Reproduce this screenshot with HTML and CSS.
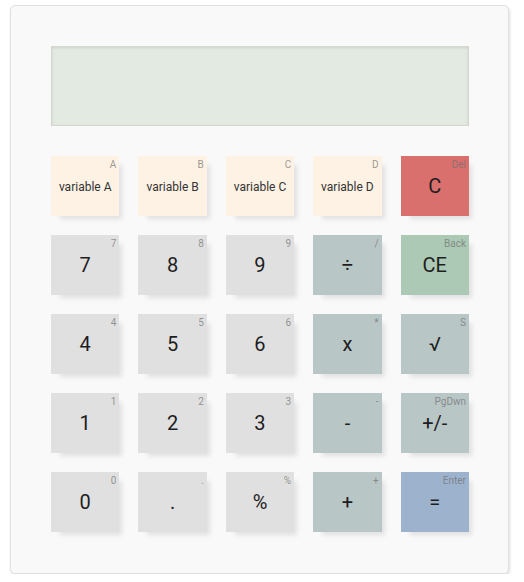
FILE: index.html
```html
<!DOCTYPE html>
<html>
<head>
<meta charset="utf-8">
<link rel="stylesheet" href="styles.css">
</head>
<body>
<div class="calc">
  <div class="display"></div>
  <div class="keys">
    <div class="key var"><span class="hint">A</span><span class="lbl small">variable A</span></div>
    <div class="key var"><span class="hint">B</span><span class="lbl small">variable B</span></div>
    <div class="key var"><span class="hint">C</span><span class="lbl small">variable C</span></div>
    <div class="key var"><span class="hint">D</span><span class="lbl small">variable D</span></div>
    <div class="key clear"><span class="hint">Del</span><span class="lbl">C</span></div>

    <div class="key num"><span class="hint">7</span><span class="lbl">7</span></div>
    <div class="key num"><span class="hint">8</span><span class="lbl">8</span></div>
    <div class="key num"><span class="hint">9</span><span class="lbl">9</span></div>
    <div class="key op"><span class="hint">/</span><span class="lbl">÷</span></div>
    <div class="key ce"><span class="hint">Back</span><span class="lbl">CE</span></div>

    <div class="key num"><span class="hint">4</span><span class="lbl">4</span></div>
    <div class="key num"><span class="hint">5</span><span class="lbl">5</span></div>
    <div class="key num"><span class="hint">6</span><span class="lbl">6</span></div>
    <div class="key op"><span class="hint">*</span><span class="lbl">x</span></div>
    <div class="key op"><span class="hint">S</span><span class="lbl">√</span></div>

    <div class="key num"><span class="hint">1</span><span class="lbl">1</span></div>
    <div class="key num"><span class="hint">2</span><span class="lbl">2</span></div>
    <div class="key num"><span class="hint">3</span><span class="lbl">3</span></div>
    <div class="key op"><span class="hint">-</span><span class="lbl">-</span></div>
    <div class="key op"><span class="hint">PgDwn</span><span class="lbl">+/-</span></div>

    <div class="key num"><span class="hint">0</span><span class="lbl">0</span></div>
    <div class="key num"><span class="hint">.</span><span class="lbl">.</span></div>
    <div class="key num"><span class="hint">%</span><span class="lbl">%</span></div>
    <div class="key op"><span class="hint">+</span><span class="lbl">+</span></div>
    <div class="key eq"><span class="hint">Enter</span><span class="lbl">=</span></div>
  </div>
</div>
</body>
</html>
```
FILE: styles.css
```css
html, body {
  margin: 0;
  padding: 0;
  background: #ffffff;
}
body {
  font-family: Roboto, "Liberation Sans", sans-serif;
  color: #222;
}
.calc {
  box-sizing: border-box;
  margin: 5px 0 0 10px;
  width: 499px;
  height: 569px;
  background: #f9f9f9;
  border: 1px solid #e0e0e0;
  border-radius: 5px;
  box-shadow: 1px 2px 3px rgba(0, 0, 0, 0.12);
  padding: 40px 39px 40px 40px;
}
.display {
  box-sizing: border-box;
  width: 418px;
  height: 80px;
  background: #e3eae2;
  border: 1px solid #d3d9d1;
  box-shadow: inset 0 1px 3px rgba(0, 0, 0, 0.1);
}
.keys {
  margin-top: 30px;
  width: 418px;
  display: grid;
  grid-template-columns: repeat(5, 1fr);
  column-gap: 19px;
  row-gap: 19px;
}
.key {
  position: relative;
  height: 60px;
  display: flex;
  align-items: center;
  justify-content: center;
  box-shadow: 6px 6px 5px -3px rgba(0, 0, 0, 0.1);
}
.lbl {
  font-size: 20px;
  line-height: 24px;
  color: #1e1e1e;
}
.lbl.small {
  font-size: 12px;
  line-height: 14px;
  color: #333;
  padding-top: 1px;
}
.hint {
  position: absolute;
  top: 3px;
  right: 3px;
  font-size: 10px;
  line-height: 12px;
  color: rgba(110, 110, 110, 0.7);
}
.var { background: #fdf2e4; }
.num { background: #e0e0e0; }
.op { background: #b9c6c6; }
.clear { background: #d9706e; }
.ce { background: #abc9b4; }
.eq { background: #9db3cd; }
```
